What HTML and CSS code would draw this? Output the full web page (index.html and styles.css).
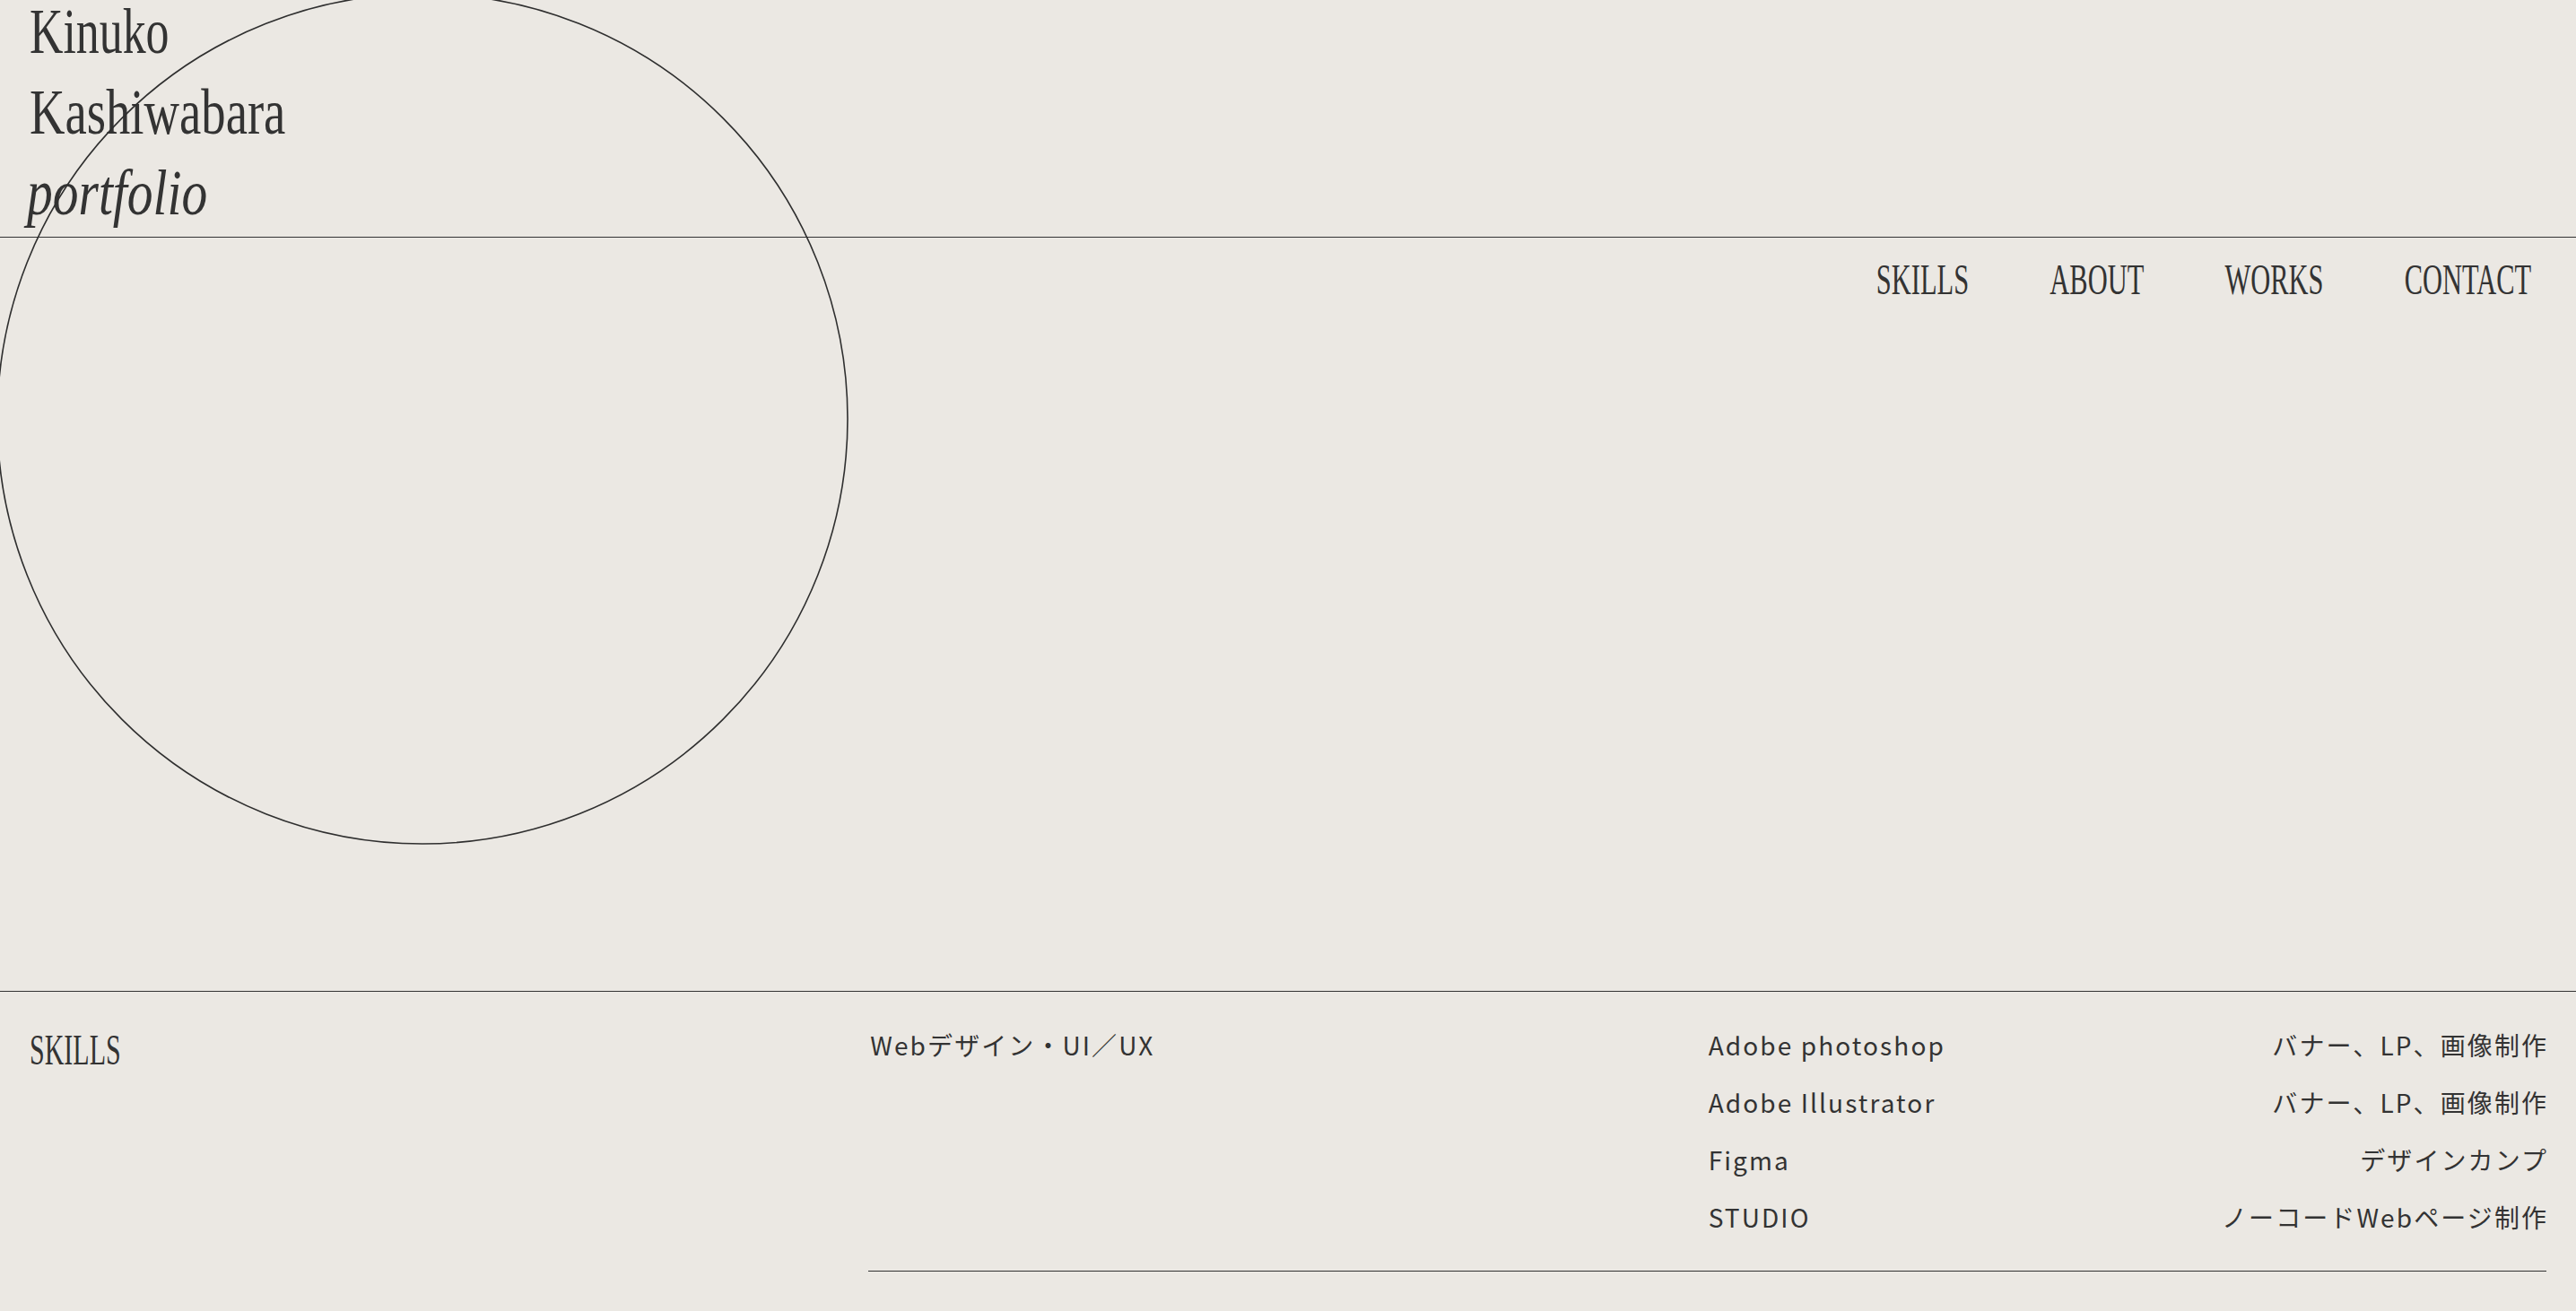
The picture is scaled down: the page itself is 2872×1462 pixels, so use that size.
FILE: index.html
```html
<!DOCTYPE html>
<html lang="ja">
<head>
<meta charset="utf-8">
<title>Kinuko Kashiwabara portfolio</title>
<link rel="stylesheet" href="styles.css">
</head>
<body>
<div class="page">
  <svg class="circle" width="952" height="952" viewBox="0 0 952 952" aria-hidden="true">
    <circle cx="476" cy="476" r="474" fill="none" stroke="#2f2f2f" stroke-width="1.6"/>
  </svg>
  <header class="site-header">
    <h1 class="brand">
      <span class="brand-line brand-first">Kinuko</span>
      <span class="brand-line">Kashiwabara</span>
      <span class="brand-line brand-italic">portfolio</span>
    </h1>
  </header>
  <section class="hero">
    <nav class="nav">
      <ul class="nav-list">
        <li><a class="nav-link" href="#skills">SKILLS</a></li>
        <li><a class="nav-link" href="#about">ABOUT</a></li>
        <li><a class="nav-link" href="#works">WORKS</a></li>
        <li><a class="nav-link" href="#contact">CONTACT</a></li>
      </ul>
    </nav>
  </section>
  <section class="skills" id="skills">
    <h2 class="section-title"><span class="section-title-text">SKILLS</span></h2>
    <div class="skills-body">
      <p class="skills-category">Webデザイン・UI／UX</p>
      <ul class="skills-list">
        <li class="skill-row"><span>Adobe photoshop</span><span>バナー、LP、画像制作</span></li>
        <li class="skill-row"><span>Adobe Illustrator</span><span>バナー、LP、画像制作</span></li>
        <li class="skill-row"><span>Figma</span><span>デザインカンプ</span></li>
        <li class="skill-row"><span>STUDIO</span><span>ノーコードWebページ制作</span></li>
      </ul>
    </div>
  </section>
</div>
</body>
</html>
```
FILE: styles.css
```css
* { box-sizing: border-box; }

html, body {
  margin: 0;
  padding: 0;
}

body {
  background: #ebe8e3;
  color: #333;
  font-family: "Liberation Serif", "Times New Roman", serif;
  overflow: hidden;
}

.page {
  position: relative;
  display: flow-root;
  min-height: 1462px;
}

.circle {
  position: absolute;
  left: -5px;
  top: -9px;
  pointer-events: none;
  z-index: 2;
}

.site-header {
  border-bottom: 1px solid #333;
  padding: 0 33px 4px;
}

.brand {
  margin: -10px 0 0;
  font-weight: 400;
  font-size: 71px;
  line-height: 90px;
}

.brand-line {
  display: block;
  transform: scaleX(0.77);
  transform-origin: left center;
  white-space: nowrap;
}

.brand-first {
  transform: scaleX(0.73);
}

.brand-italic {
  font-style: italic;
  transform: scaleX(0.81);
  margin-left: -3px;
}

.hero {
  height: 840px;
}

.nav {
  display: flex;
  justify-content: flex-end;
  padding: 23px 50px 0;
}

.nav-list {
  display: flex;
  gap: 142px;
  list-style: none;
  margin: 0;
  padding: 0;
  transform: scaleX(0.635);
  transform-origin: right center;
  font-size: 48px;
  line-height: 48px;
}

.nav-link {
  color: #333;
  text-decoration: none;
}

.skills {
  border-top: 1px solid #333;
  display: grid;
  grid-template-columns: 1fr 2fr;
  padding: 27px 33px 0;
}

.section-title {
  margin: 14px 0 0;
  font-weight: 400;
  font-size: 48px;
  line-height: 48px;
}

.section-title-text {
  display: inline-block;
  transform: scaleX(0.625);
  transform-origin: left center;
}

.skills-body {
  display: grid;
  grid-template-columns: 1fr 1fr;
  border-bottom: 1px solid #333;
  padding-bottom: 28px;
  font-family: "Noto Sans CJK JP", "Noto Sans", sans-serif;
  font-size: 28px;
  line-height: 64px;
  letter-spacing: 0.075em;
}

.skills-category {
  margin: 0;
  padding-left: 2px;
}

.skills-list {
  list-style: none;
  margin: 0;
  padding: 0;
}

.skill-row {
  display: flex;
  justify-content: space-between;
  padding-left: 1px;
}

.skill-row span:last-child {
  margin-right: -0.075em;
}
```
